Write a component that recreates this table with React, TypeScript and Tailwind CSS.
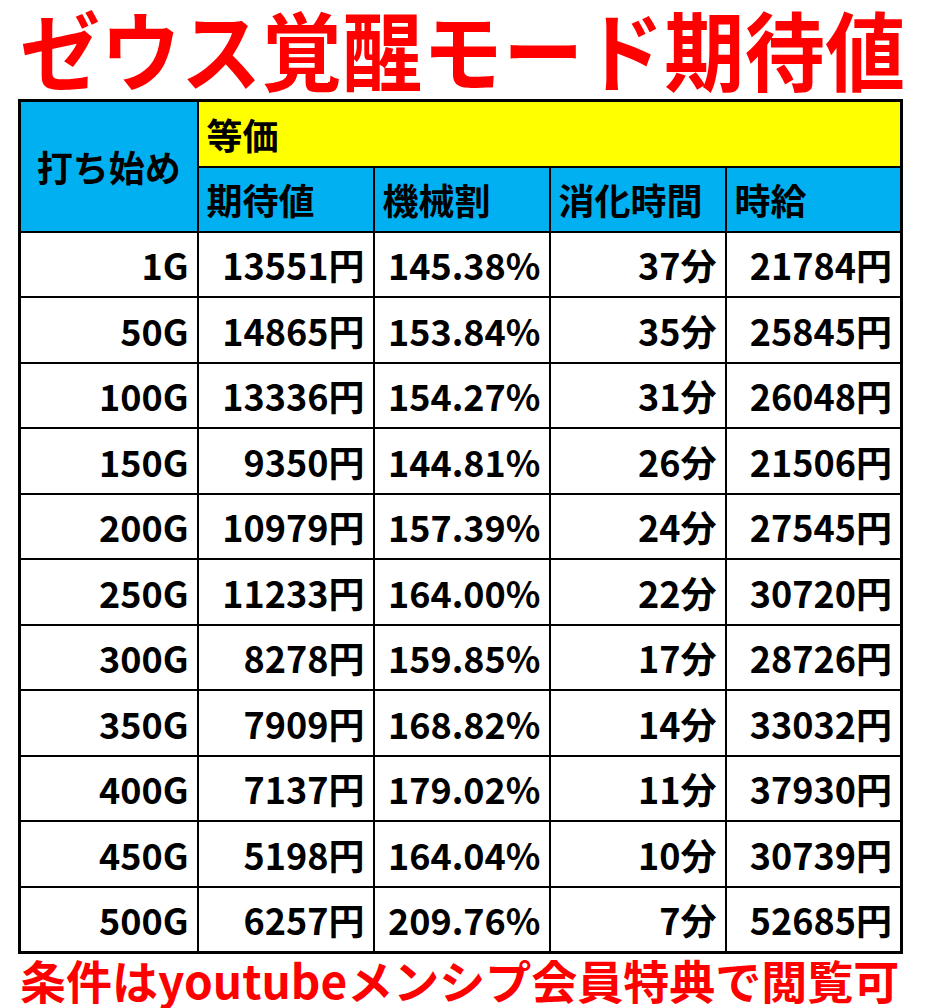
const rows = [
  ["1G", "13551円", "145.38%", "37分", "21784円"],
  ["50G", "14865円", "153.84%", "35分", "25845円"],
  ["100G", "13336円", "154.27%", "31分", "26048円"],
  ["150G", "9350円", "144.81%", "26分", "21506円"],
  ["200G", "10979円", "157.39%", "24分", "27545円"],
  ["250G", "11233円", "164.00%", "22分", "30720円"],
  ["300G", "8278円", "159.85%", "17分", "28726円"],
  ["350G", "7909円", "168.82%", "14分", "33032円"],
  ["400G", "7137円", "179.02%", "11分", "37930円"],
  ["450G", "5198円", "164.04%", "10分", "30739円"],
  ["500G", "6257円", "209.76%", "7分", "52685円"],
];

const heads = ["期待値", "機械割", "消化時間", "時給"];

export default function App() {
  return (
    <div className="h-[1008px] w-[926px] overflow-hidden bg-white font-['Noto_Sans_CJK_JP','Noto_Sans',sans-serif] text-black">
      <h1 className="flex h-[99px] items-center justify-center pb-[6px] text-[80px] leading-none font-bold whitespace-nowrap text-[#ff0000]">
        <span className="inline-block scale-y-[1.08] tracking-[0.5px]">ゼウス覚醒モード期待値</span>
      </h1>
      <table className="ml-[18px] w-[885px] table-fixed border-collapse border-[3px] border-black text-[36px] leading-none font-bold">
        <thead>
          <tr className="h-[66px]">
            <th rowSpan={2} className="w-[178px] border-2 border-black bg-[#00b0f0] text-center font-bold">
              打ち始め
            </th>
            <th colSpan={4} className="border-2 border-black bg-[#ffff00] pl-[8px] text-left font-bold">
              等価
            </th>
          </tr>
          <tr className="h-[65px]">
            {heads.map((h) => (
              <th key={h} className="border-2 border-black bg-[#00b0f0] pl-[8px] text-left font-bold">
                {h}
              </th>
            ))}
          </tr>
        </thead>
        <tbody>
          {rows.map((r) => (
            <tr key={r[0]} className="h-[65.5px]">
              {r.map((c, i) => (
                <td key={i} className="border-2 border-black pr-[8px] text-right">
                  {c}
                </td>
              ))}
            </tr>
          ))}
        </tbody>
      </table>
      <p className="pl-[20px] text-[46px] leading-[50px] font-bold whitespace-nowrap text-[#ff0000]">
        条件はyoutubeメンシプ会員特典で閲覧可
      </p>
    </div>
  );
}
